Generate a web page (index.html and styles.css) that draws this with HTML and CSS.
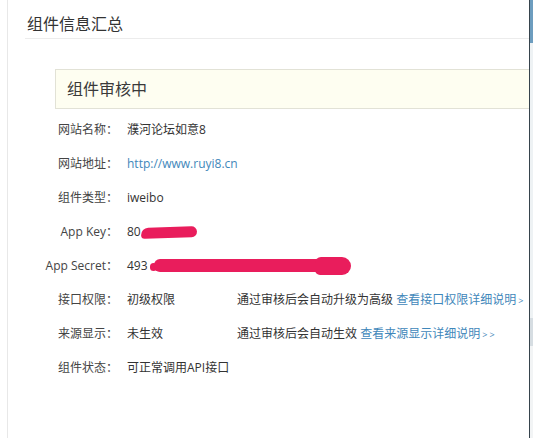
FILE: index.html
```html
<!DOCTYPE html>
<html lang="zh-CN">
<head>
<meta charset="utf-8">
<title>组件信息汇总</title>
<link rel="stylesheet" href="styles.css">
</head>
<body>
<div class="page">
  <div class="panel">
    <h2 class="title">组件信息汇总</h2>
    <div class="notice">组件审核中</div>
    <div class="rows">
      <div class="label">网站名称：</div><div class="value">濮河论坛如意8</div><div class="extra"></div>
      <div class="label">网站地址：</div><div class="value"><a class="link" href="#">http://www.ruyi8.cn</a></div><div class="extra"></div>
      <div class="label">组件类型：</div><div class="value">iweibo</div><div class="extra"></div>
      <div class="label">App Key：</div><div class="value secret">80<span class="mark mark-key"></span></div><div class="extra"></div>
      <div class="label">App Secret：</div><div class="value secret">493<span class="mark mark-dot"></span><span class="mark mark-secret"></span><span class="mark mark-end"></span></div><div class="extra"></div>
      <div class="label">接口权限：</div><div class="value">初级权限</div><div class="extra">通过审核后会自动升级为高级 <a class="link" href="#">查看接口权限详细说明<span class="arr">&gt;</span></a></div>
      <div class="label">来源显示：</div><div class="value">未生效</div><div class="extra">通过审核后会自动生效 <a class="link" href="#">查看来源显示详细说明<span class="arr">&gt; &gt;</span></a></div>
      <div class="label">组件状态：</div><div class="value">可正常调用API接口</div><div class="extra"></div>
    </div>
  </div>
  <div class="edge"></div>
  <div class="strip"></div>
</div>
</body>
</html>
```
FILE: styles.css
```css
html, body {
  margin: 0;
  padding: 0;
  height: 100%;
  overflow: hidden;
  background: #ffffff;
}
body {
  font-family: "Open Sans", "Noto Sans CJK SC", sans-serif;
  color: #333;
}
.page {
  display: flex;
  height: 438px;
}
.panel {
  flex: 1;
  margin-left: 7px;
  border-left: 1px solid #e8e8e8;
  overflow: hidden;
  min-width: 0;
}
.title {
  margin: 0 0 0 17px;
  padding: 10px 0 0 2px;
  height: 28px;
  line-height: 28px;
  font-size: 16px;
  font-weight: normal;
  color: #333;
  border-bottom: 1px solid #ececec;
}
.notice {
  margin: 30px 0 0 47px;
  height: 38px;
  line-height: 38px;
  padding-left: 11px;
  font-size: 16px;
  color: #3a3a3a;
  background: #fefef1;
  border: 1px solid #e2e2d6;
  border-right: none;
}
.rows {
  margin-top: 3px;
  display: grid;
  grid-template-columns: 119px 110px 1fr;
  grid-auto-rows: 34px;
  align-items: center;
  font-size: 12px;
  white-space: nowrap;
}
.label {
  text-align: right;
  padding-right: 9px;
  color: #444;
}
.value {
  color: #333;
}
.extra {
  color: #333;
}
.link {
  color: #3f87ba;
  text-decoration: none;
}
.arr {
  font-size: 9px;
  margin-left: 2px;
}
.secret {
  position: relative;
}
.mark {
  position: absolute;
  background: #e91d5c;
}
.mark-key {
  left: 14px;
  top: 4px;
  width: 56px;
  height: 11px;
  border-radius: 8px 6px 6px 4px;
  transform: rotate(-2deg);
}
.mark-dot {
  left: 23px;
  top: 6px;
  width: 7px;
  height: 8px;
  border-radius: 4px;
}
.mark-secret {
  left: 27px;
  top: 2px;
  width: 175px;
  height: 13px;
  border-radius: 6px;
}
.mark-end {
  left: 188px;
  top: 0px;
  width: 36px;
  height: 18px;
  border-radius: 12px 18px 18px 10px;
}
.edge {
  width: 1px;
  background: #36434c;
}
.strip {
  width: 3px;
  background: linear-gradient(to bottom, #6d9dbf 0, #6d9dbf 43px, #eef2f4 43px, #eef2f4 318px, #d6dde2 318px, #d6dde2 346px, #f2f4f5 346px);
}
```
